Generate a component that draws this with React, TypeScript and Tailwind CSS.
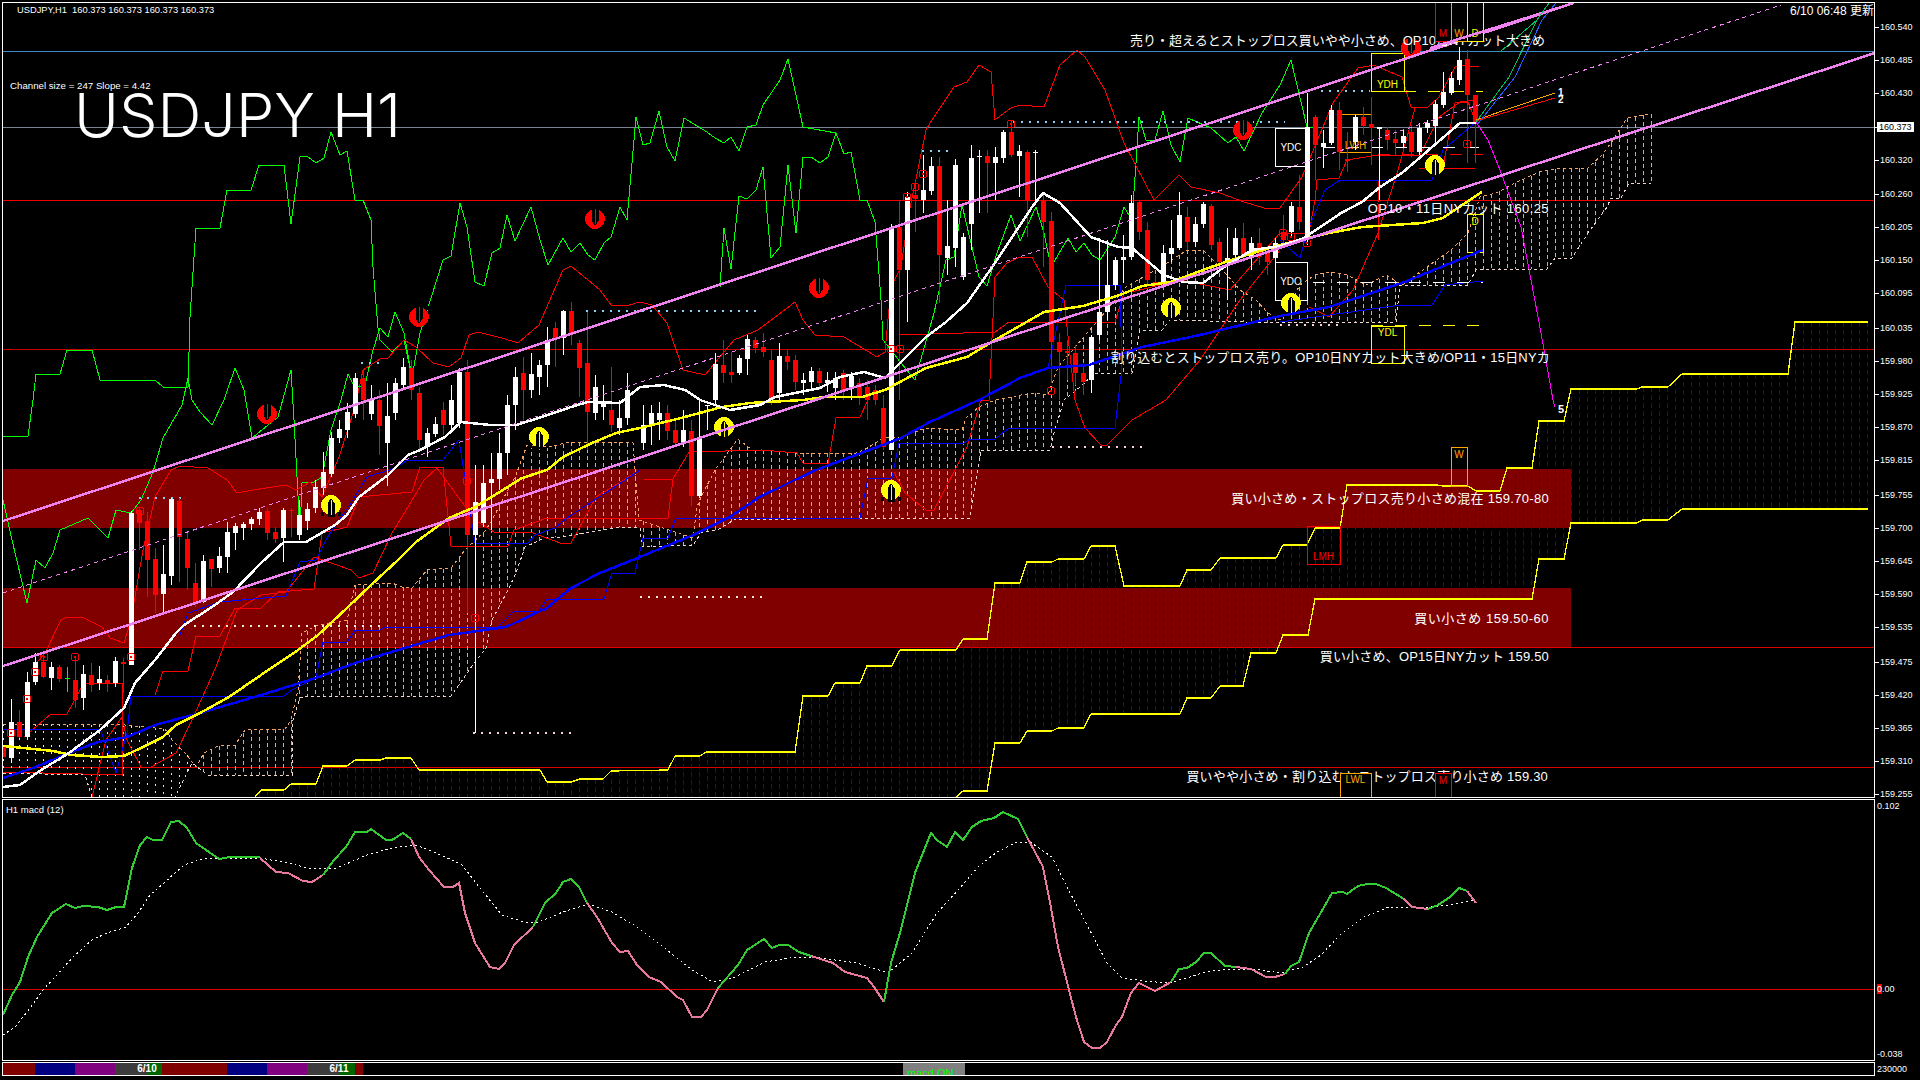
import React from "react";

type P = { pts: string; c: string; w?: number; d?: string };

const parse = (s: string) => s.trim().split(/\s+/).map((t) => t.split(",").map(Number));
const at = (a: number[][], x: number) => {
  if (x <= a[0][0]) return a[0][1];
  for (let i = 1; i < a.length; i++) {
    if (x <= a[i][0]) {
      const [x0, y0] = a[i - 1];
      const [x1, y1] = a[i];
      return y0 + ((y1 - y0) * (x - x0)) / (x1 - x0 || 1);
    }
  }
  return a[a.length - 1][1];
};

const senkouUp =
  "255,797 261,790 284,790 291,784 316,784 323,766 347,766 355,760 380,760 386,758 411,758 419,770 540,770 547,782 571,782 580,779 603,779 611,771 668,770 675,756 700,756 706,752 795,752 803,696 828,696 835,683 860,683 867,666 892,666 900,650 956,650 963,639 987,639 995,583 1020,583 1027,562 1052,562 1058,559 1084,559 1091,546 1115,546 1124,586 1180,586 1187,570 1211,570 1220,558 1276,558 1283,545 1307,545 1315,528 1340,528 1347,485 1437,485 1443,486 1468,486 1476,491 1500,491 1507,468 1532,468 1539,421 1564,421 1571,389 1637,389 1642,387 1668,387 1682,374 1788,374 1795,322 1868,322";
const senkouLow =
  "955,798 963,791 987,791 995,743 1020,743 1027,731 1052,731 1058,728 1084,728 1091,714 1180,714 1187,698 1211,698 1220,686 1243,686 1251,653 1276,653 1283,635 1308,635 1315,599 1532,599 1539,559 1564,559 1571,523 1637,523 1642,520 1668,520 1682,509 1868,509";
const kumoUp =
  "3,724 125,725 165,729 172,740 187,755 196,767 204,753 220,745 235,745 245,730 285,729 291,720 298,690 302,633 318,625 347,620 355,585 392,583 402,587 412,588 427,570 451,568 465,550 486,530 492,520 508,490 516,475 527,445 547,447 571,442 620,442 633,443 639,520 693,538 697,507 701,497 715,470 726,455 738,439 752,450 766,450 795,453 856,453 864,450 885,437 901,437 926,428 962,430 966,418 979,407 995,400 1032,393 1048,395 1058,367 1101,317 1126,287 1150,273 1167,263 1187,250 1203,250 1220,267 1240,290 1256,300 1268,313 1280,320 1300,285 1315,275 1329,272 1347,275 1366,285 1386,275 1402,285 1427,267 1451,250 1468,233 1480,197 1496,193 1515,183 1539,172 1562,168 1588,168 1602,155 1611,143 1627,118 1651,114";
const kumoLow =
  "3,773 85,775 92,797 175,797 180,787 192,763 208,775 292,775 292,723 300,698 307,696 451,696 475,662 486,648 492,620 508,590 516,573 525,547 547,537 563,537 620,527 640,528 642,547 693,545 701,533 717,530 734,520 864,518 970,518 978,470 981,450 1050,450 1054,433 1064,400 1085,383 1093,373 1132,373 1140,330 1162,330 1170,320 1280,323 1396,322 1400,285 1468,285 1476,270 1547,269 1555,258 1572,258 1588,233 1607,207 1611,198 1621,198 1629,183 1651,183";

const bars = (a: string, b: string, from: number, to: number, pred?: (x: number) => boolean) => {
  const u = parse(a);
  const l = parse(b);
  let d = "";
  for (let x = 3; x <= to; x += 8) {
    if (x < from || (pred && !pred(x))) continue;
    const t = Math.round(at(u, x));
    const m = Math.round(at(l, x));
    if (m > t) d += `M${x} ${t}V${m}`;
  }
  return d;
};

const thin: P[] = [
  { c: "#00ff00", pts: "3,436 28,436 33,400 36,374 60,374 67,350 92,350 100,380 155,380 163,387 188,387 190,317 196,228 220,228 227,190 251,190 259,165 284,165 291,224 300,157 307,156 316,163 324,158 331,132 340,155 347,151 355,200 363,200 371,220 373,267 378,328 380,340 392,352 404,340 412,377" },
  { c: "#00ff00", pts: "3,500 12,540 27,603 36,560 45,568 53,553 60,530 88,518 108,538 116,510 131,513 141,500 153,472 163,438 182,405 188,378 192,400 200,412 212,425 224,400 235,368 244,390 252,438 278,417 291,370 294,420 300,533 302,483 314,482 322,477 331,430 341,400 348,374 355,388 365,385 373,350 380,328 388,337 395,312 404,333 412,377 420,333 443,260 451,256 460,203 467,227 475,282 484,286 492,253 500,248 507,215 515,241 531,207 540,240 548,265 563,238 571,252 580,243 588,255 595,260 604,243 611,237 620,207 627,220 636,117 643,145 650,143 659,111 667,147 675,161 684,118 707,132 715,138 724,143 731,137 739,151 747,127 756,125 763,105 780,80 788,59 803,127 836,133 844,154 851,152 860,200 867,200 875,222 881,300 883,340 891,350 901,363 915,380 934,313 946,260 954,257 962,205 979,277 987,286 997,253 1011,215 1020,241 1036,207 1044,233 1051,267 1068,238 1076,252 1084,243 1092,255 1100,260 1115,237 1124,207 1132,220 1136,163 1139,117 1146,140 1155,140 1163,111 1171,145 1180,162 1188,118 1211,128 1228,143 1236,137 1244,151 1262,113 1280,85 1291,60 1307,127 1315,127" },
  { c: "#00ff00", pts: "720,287 724,228 731,269 739,196 747,199 756,190 763,167 771,258 780,247 788,165 796,233 803,157 811,157 820,163 828,157 836,133" },
  { c: "#ff0000", pts: "33,667 45,653 61,620 67,617 82,617 102,627 110,638 124,643 131,620 143,550 155,497 171,470 180,466 208,468 227,480 237,493 253,490 286,485 296,490 310,482 322,497 339,457 355,407 363,370 380,359 388,358 404,340 416,347 433,363 449,367 461,358 469,335 478,332 502,338 518,343 539,325 563,270 571,266 600,290 612,306 629,305 640,302 652,305 667,323 683,370 705,375 734,340 758,330 795,302 803,320 815,335 844,337 877,357 885,352 891,287 901,267 909,213 926,130 932,120 954,87 967,82 979,65 991,72 995,120 1011,108 1020,105 1044,107 1060,65 1077,50 1085,57 1105,90 1124,143 1154,200 1179,175 1191,187 1220,193 1244,202 1264,208 1280,208 1302,177 1333,103 1358,68 1374,65 1390,72 1402,77 1411,107 1427,108 1439,97 1455,67 1468,65" },
  { c: "#ff0000", pts: "92,797 106,740 122,717 127,740 141,767 151,767 176,753 192,720 216,667 237,610 261,595 286,592 314,557 351,570 359,578 373,573 392,533 408,507 424,480 437,468 475,520 494,532 530,532 563,544 571,543 596,497 640,470" },
  { c: "#ff0000", pts: "893,470 905,493 926,510 934,510 967,447 981,400 989,400 995,277 1007,263 1020,257 1032,257 1048,287 1064,300 1075,400 1085,428 1101,445 1107,445 1132,420 1166,400 1200,360 1240,300 1280,250" },
  { c: "#ff0000", pts: "24,737 51,714 67,714 84,683 122,683 122,775 3,772" },
  { c: "#ff0000", pts: "155,695 163,671 188,671 196,636 220,636 235,608 261,608 278,592 314,589 322,533 347,527 359,497 412,492 420,467 443,467 451,546 508,546 514,530 547,518 668,518 673,479 644,479 673,479 689,452 762,450 797,453 803,463 828,464 836,418 860,417 868,400" },
  { c: "#ff0000", pts: "900,335 995,332 1009,322 1115,322 1124,293 1140,290 1180,280 1230,290 1280,233 1309,233 1315,200 1317,180 1339,178 1347,160 1378,155 1420,155 1439,117 1460,102 1475,100" },
  { c: "#ff0000", pts: "1309,307 1329,317 1353,290 1378,233 1398,170 1415,108" },
  { c: "#ff0000", pts: "1380,160 1378,203 1379,240" },
  { c: "#ff0000", pts: "1419,168 1475,168" },
  { c: "#ff0000", pts: "1443,167 1455,103 1468,102 1476,122" },
  { c: "#0000ff", pts: "3,729 100,729 116,773 127,733 131,696 284,696 292,690 316,678 323,642 347,642 355,630 380,630 386,627 498,627 514,611 539,611 547,599 604,599 612,573 635,573 643,538 668,538 676,518 860,518 868,478 892,478 899,443 964,443 970,439 995,439 1009,428 1115,428 1122,367 1120,285 1066,285 1048,368" },
  { c: "#0000ff", pts: "180,635 188,613 220,602 286,596 300,562 316,560 327,538 351,503 367,477 392,469 408,460 443,460 459,440 475,543 527,544 535,535 555,528 567,518 610,490 640,470" },
  { c: "#0000ff", pts: "1280,240 1300,258 1307,232 1325,190 1340,180 1400,180 1432,180 1443,150 1476,122" },
  { c: "#0000ff", pts: "1280,322 1400,305 1432,305 1445,285 1483,281" },
];

const candles: [number, number, number, number, number, string][] = [
  [3,745,757,745,757,"r"],[11,722,758,699,763,"w"],[19,722,737,710,738,"r"],[27,682,737,672,738,"w"],[35,662,682,653,685,"w"],[43,662,677,653,678,"r"],[51,667,678,662,690,"w"],[59,667,679,665,682,"r"],[67,678,679,667,692,"g"],[75,680,700,657,708,"r"],[83,674,698,665,710,"w"],[91,675,685,663,692,"r"],[99,679,683,666,690,"w"],[107,680,684,675,692,"r"],[115,661,683,657,687,"w"],[123,662,664,658,693,"r"],[131,513,665,511,665,"w"],[139,510,523,507,550,"r"],[147,521,560,512,597,"r"],[155,559,595,548,613,"r"],[163,574,594,545,613,"w"],[171,499,576,498,585,"w"],[179,501,537,498,582,"r"],[187,539,568,532,590,"r"],[195,583,603,563,607,"r"],[203,561,602,555,603,"w"],[211,559,569,559,587,"r"],[219,556,568,547,573,"w"],[227,532,557,522,573,"w"],[235,526,533,523,550,"w"],[243,524,528,522,540,"w"],[251,519,524,517,530,"w"],[259,512,519,508,525,"w"],[267,511,533,508,540,"r"],[275,532,539,527,543,"r"],[283,510,538,508,562,"w"],[291,510,511,508,537,"r"],[299,515,535,500,540,"w"],[307,509,521,503,530,"w"],[315,487,508,480,513,"w"],[323,472,488,452,495,"w"],[331,438,474,432,477,"w"],[339,429,438,420,443,"w"],[347,412,430,403,438,"w"],[355,378,414,373,418,"w"],[363,378,400,370,420,"r"],[371,400,414,385,420,"w"],[379,400,426,390,455,"r"],[387,416,443,383,486,"w"],[395,383,413,378,420,"w"],[403,367,385,358,388,"w"],[411,368,390,360,400,"r"],[419,393,440,387,450,"r"],[427,433,447,428,457,"w"],[435,424,434,417,437,"w"],[443,410,425,402,435,"r"],[451,400,425,385,430,"w"],[459,372,423,368,428,"w"],[467,372,535,360,613,"r"],[475,502,535,465,733,"w"],[483,483,523,465,527,"w"],[491,479,483,453,530,"w"],[499,453,479,433,490,"w"],[507,405,453,395,475,"w"],[515,377,405,367,430,"w"],[523,373,390,357,420,"r"],[531,374,390,353,398,"w"],[539,365,377,360,395,"w"],[547,340,365,327,387,"w"],[555,328,338,322,367,"r"],[563,311,338,310,355,"w"],[571,311,333,302,345,"r"],[579,343,368,340,397,"r"],[587,363,412,312,450,"r"],[595,387,413,375,420,"w"],[603,402,407,385,420,"w"],[611,410,425,367,432,"r"],[619,418,428,400,435,"w"],[627,390,418,373,425,"w"],[643,425,443,405,450,"w"],[651,413,425,405,445,"w"],[659,413,420,402,440,"w"],[667,413,431,405,440,"r"],[675,430,443,420,447,"r"],[683,430,443,410,447,"w"],[691,431,496,420,506,"r"],[699,437,496,400,498,"w"],[707,405,406,405,430,"w"],[715,364,400,353,405,"w"],[723,365,373,340,383,"r"],[731,372,375,352,383,"r"],[739,358,373,355,375,"w"],[747,339,359,335,375,"w"],[755,340,348,337,353,"r"],[763,347,352,333,357,"r"],[771,360,400,350,405,"r"],[779,356,393,343,400,"w"],[787,356,362,350,370,"r"],[795,360,382,355,390,"r"],[803,380,383,373,395,"w"],[811,371,382,367,388,"w"],[819,371,383,368,390,"r"],[827,380,383,372,392,"w"],[835,378,388,372,400,"w"],[843,373,390,370,400,"r"],[851,376,388,372,400,"w"],[859,383,397,378,405,"r"],[867,387,400,380,420,"r"],[875,390,400,385,405,"r"],[883,408,447,395,450,"r"],[891,227,450,224,450,"w"],[899,227,270,200,400,"r"],[907,197,270,192,322,"w"],[915,195,199,183,232,"r"],[923,190,200,155,213,"w"],[931,166,191,157,195,"w"],[939,166,255,157,303,"r"],[947,246,258,200,275,"w"],[955,165,248,159,267,"w"],[963,237,277,233,280,"w"],[971,158,224,145,250,"w"],[979,156,157,150,213,"w"],[987,156,163,150,213,"r"],[995,157,163,147,200,"w"],[1003,132,158,130,163,"w"],[1011,132,155,120,157,"r"],[1019,151,156,145,197,"w"],[1027,152,200,150,237,"r"],[1035,152,153,150,200,"w"],[1043,200,222,193,267,"r"],[1051,221,342,212,383,"r"],[1059,342,352,333,400,"r"],[1067,351,353,340,380,"r"],[1075,353,373,345,385,"r"],[1083,373,382,365,395,"r"],[1091,337,380,335,393,"w"],[1099,312,335,238,340,"w"],[1107,285,312,240,320,"w"],[1115,260,285,257,290,"w"],[1123,257,260,235,283,"w"],[1131,203,257,195,260,"w"],[1139,202,232,200,240,"r"],[1147,230,280,222,285,"r"],[1155,282,285,275,290,"r"],[1163,253,282,245,285,"w"],[1171,248,254,220,262,"w"],[1179,215,248,192,250,"w"],[1187,217,242,207,250,"r"],[1195,224,242,217,247,"w"],[1203,204,224,202,228,"w"],[1211,206,245,204,250,"r"],[1219,242,262,238,270,"r"],[1227,258,263,228,300,"w"],[1235,238,255,228,260,"w"],[1243,238,257,223,262,"r"],[1251,243,257,237,270,"w"],[1259,243,257,228,265,"r"],[1267,253,262,247,275,"r"],[1275,243,258,238,268,"w"],[1283,232,240,215,245,"r"],[1291,206,232,202,237,"w"],[1299,207,222,175,230,"r"],[1307,127,240,93,245,"w"],[1315,117,145,115,180,"r"],[1323,143,147,130,168,"w"],[1331,110,143,105,145,"w"],[1339,110,152,102,170,"r"],[1347,159,161,132,172,"r"],[1355,117,142,115,150,"w"],[1363,117,126,107,135,"r"],[1371,124,128,97,165,"r"],[1379,127,129,127,200,"w"],[1387,130,140,127,150,"r"],[1395,139,143,130,155,"r"],[1403,136,143,130,148,"w"],[1411,132,152,125,157,"r"],[1419,128,152,123,155,"w"],[1427,123,128,120,133,"w"],[1435,104,126,100,145,"w"],[1443,92,105,72,108,"w"],[1451,78,93,72,95,"w"],[1459,60,80,47,85,"w"],[1467,59,95,50,163,"r"],[1475,95,122,95,163,"r"],
];

const maWhite = "3,787 20,785 41,770 69,753 100,730 124,708 135,683 155,660 176,633 184,625 212,607 233,592 261,563 284,542 306,542 335,525 347,515 359,497 388,475 408,455 420,450 445,437 461,422 490,425 516,425 539,418 571,407 588,402 620,403 640,387 664,385 685,390 700,400 730,410 760,405 775,397 820,388 840,377 864,372 885,378 893,370 926,337 946,322 967,303 995,263 1032,207 1043,193 1060,203 1091,237 1118,247 1132,248 1164,275 1183,282 1203,283 1224,267 1252,250 1280,246 1304,238 1341,213 1362,202 1380,187 1402,173 1431,148 1460,123 1476,123";
const maYellow = "3,746 53,751 71,755 102,757 124,756 143,747 163,737 176,725 200,713 229,697 261,675 294,653 318,635 347,608 371,585 398,560 416,542 449,518 475,507 498,493 522,478 547,470 563,457 592,443 616,433 640,428 681,418 722,407 750,403 803,400 824,397 862,397 885,390 926,368 967,357 995,340 1044,312 1083,306 1120,295 1142,286 1171,282 1203,270 1240,257 1280,245 1329,233 1362,227 1423,223 1443,218 1482,192";
const maBlue = "3,778 33,768 69,753 98,742 127,737 155,725 200,713 261,695 316,678 355,663 408,647 449,635 506,627 547,608 571,588 600,573 640,557 693,535 730,517 758,498 811,472 869,450 901,438 930,422 979,400 1020,378 1048,368 1089,365 1142,347 1191,337 1280,316 1329,307 1402,283 1451,263 1483,250";

const rings = [[11,733],[27,699],[35,672],[44,657],[75,657],[131,657],[140,511],[467,481],[475,618],[891,349],[900,349],[907,197],[915,187],[923,174],[1011,124],[1051,391],[1283,233],[1291,237],[1307,243],[1467,144]];
const reds = [[267,414],[419,317],[595,219],[819,288],[1243,130],[1411,48]];
const ups = [[331,505],[539,437],[724,427],[891,490],[1171,308],[1291,303],[1435,165]];

const dots: [number, number, number, string][] = [
  [361,380,363,"#87cefa"],[586,762,311,"#87cefa"],[922,954,151,"#87cefa"],[1013,1146,122,"#87cefa"],[1156,1285,122,"#87cefa"],[1321,1370,91,"#87cefa"],[139,186,498,"#87cefa"],
  [194,380,626,"#f5e6e6"],[640,762,597,"#f5e6e6"],[473,571,733,"#ffd0d8"],[1052,1146,447,"#ffd0d8"],[1280,1340,325,"#ffd0d8"],
];
const dashes: [number, number, number, string][] = [
  [1323,1483,147,"#ffffff"],[1313,1483,282,"#ffffff"],[1371,1483,325,"#ffff00"],[1404,1483,91,"#ffff00"],[1467,1483,66,"#ff0000"],[1378,1483,154,"#ff0000"],
];

const labels: [number, number, string, string][] = [
  [1545, 40, "売り・超えるとストップロス買いやや小さめ、OP10日NYカット大きめ", "tracking-normal"],
  [1549, 208, "OP10・11日NYカット 160.25", "tracking-[0.4px]"],
  [1550, 357, "割り込むとストップロス売り。OP10日NYカット大きめ/OP11・15日NYカ", "tracking-[0.2px]"],
  [1549, 498, "買い小さめ・ストップロス売り小さめ混在 159.70-80", "tracking-[0.3px]"],
  [1549, 618, "買い小さめ 159.50-60", "tracking-[0.5px]"],
  [1549, 656, "買い小さめ、OP15日NYカット 159.50", "tracking-[0.2px]"],
  [1548, 776, "買いやや小さめ・割り込むとストップロス売り小さめ 159.30", "tracking-[0.2px]"],
];

const boxes: [number, number, number, number, string, string, number, boolean][] = [
  [1371,53,33,38,"#ffff00","YDH",84,false],
  [1340,114,31,38,"#ffa500","LWH",145,false],
  [1275,128,32,38,"#ffffff","YDC",147,false],
  [1275,262,32,38,"#ffffff","YDO",281,false],
  [1371,326,33,37,"#ffff00","YDL",332,false],
  [1467,214,16,38,"#ffff00","D",221,false],
  [1451,447,16,39,"#ffa500","W",454,false],
  [1307,526,33,38,"#ff0000","LMH",556,false],
  [1340,773,31,30,"#ffa500","LWL",779,true],
  [1435,773,16,30,"#ff0000","M",780,true],
  [1435,-4,16,45,"#ff0000","M",33,true],
  [1451,-4,16,45,"#ffa500","W",33,true],
  [1467,-4,16,45,"#ffff00","D",33,true],
];

const axis: [string, string][] = [
  ["160.540","h-[33px]"],["160.485","h-[33px]"],["160.430","h-[34px]"],["160.373","h-[33px]"],["160.320","h-[34px]"],["160.260","h-[33px]"],["160.205","h-[33px]"],["160.150","h-[33px]"],["160.095","h-[35px]"],["160.035","h-[33px]"],["159.980","h-[33px]"],["159.925","h-[33px]"],["159.870","h-[33px]"],["159.815","h-[35px]"],["159.755","h-[33px]"],["159.700","h-[33px]"],["159.645","h-[33px]"],["159.590","h-[33px]"],["159.535","h-[35px]"],["159.475","h-[33px]"],["159.420","h-[33px]"],["159.365","h-[33px]"],["159.310","h-[33px]"],["159.255","h-[10px]"],
];

const macd: [string, string][] = [
  ["#32cd32","3,1015 12,995 20,982 28,957 37,937 52,913 66,904 75,908 83,906 98,907 107,910 116,907 124,907 132,868 140,845 147,837 153,840 162,840 171,822 179,821 187,828 196,843 219,859 230,857 260,857"],
  ["#e8789f","260,858 276,872 288,873 303,881 312,882 323,875"],
  ["#32cd32","323,875 334,860 346,847 355,832 367,832 371,829 386,840 392,840 403,833 411,839"],
  ["#e8789f","411,839 419,857 429,870 444,887 453,887 459,883 465,913 475,943 490,967 499,969 505,963 514,945 533,927"],
  ["#32cd32","533,927 545,903 556,893 563,882 571,879 579,887 587,903"],
  ["#e8789f","587,903 597,917 612,943 620,952 628,951 637,965 649,977 661,982 677,997 683,1000 692,1017 701,1017 707,1010 718,988"],
  ["#32cd32","718,988 738,965 747,950 764,939 772,948 779,945 788,945 799,952 811,956"],
  ["#e8789f","811,956 833,963 845,972 867,978 874,987 884,1002"],
  ["#32cd32","884,1002 891,963 900,933 915,873 931,833 937,840 947,847 955,832 963,840 972,827 981,821 994,818 1003,812 1018,819 1027,837"],
  ["#e8789f","1027,837 1043,867 1049,897 1058,947 1069,990 1076,1017 1084,1042 1092,1048 1100,1048 1107,1042 1116,1025 1122,1017 1131,993 1139,983 1155,991 1171,982"],
  ["#32cd32","1171,982 1179,969 1187,968 1196,962 1204,953 1211,953 1225,966 1236,967"],
  ["#e8789f","1236,967 1251,969 1266,977 1275,977 1285,974"],
  ["#32cd32","1285,974 1291,966 1299,962 1309,933 1324,907 1332,893 1343,892 1347,894 1358,886 1367,884 1376,884 1386,888 1404,899"],
  ["#e8789f","1404,899 1412,907 1428,909"],
  ["#32cd32","1428,909 1438,905 1450,897 1459,888 1467,891"],
  ["#e8789f","1467,891 1476,903"],
];
const signal = "3,1035 15,1027 31,1007 43,990 55,977 73,957 92,940 107,933 126,927 138,913 150,895 165,882 184,865 202,859 233,858 260,858 288,863 312,869 337,868 367,855 392,848 416,845 441,855 462,865 484,893 502,915 527,923 539,922 563,912 588,904 612,912 637,927 667,950 692,970 713,982 735,977 765,962 796,957 820,958 857,963 888,973 912,953 937,913 960,888 978,867 997,852 1015,843 1030,842 1052,857 1067,887 1086,923 1107,963 1122,978 1144,981 1168,983 1187,978 1205,972 1229,969 1254,969 1281,973 1303,967 1321,955 1340,935 1364,917 1389,907 1431,907 1450,905 1474,900";

const Line = ({ pts, c, w = 1, d }: P) => (
  <polyline points={pts} fill="none" stroke={c} strokeWidth={w} strokeDasharray={d} />
);

const UpMark = ({ x, y }: { x: number; y: number }) => (
  <g transform={`translate(${x} ${y})`}>
    <ellipse cx={0} cy={0} rx={10} ry={10} fill="#ffff00" />
    <path d="M-3.5 11.5V-2L0 -6.5L3.5 -2V11.5Z" fill="#000" />
    <path d="M0 -5V10" stroke="#ffff00" />
    <rect x={-10} y={7} width={3} height={4} fill="#000" />
    <rect x={7} y={7} width={3} height={4} fill="#000" />
  </g>
);
const DownMark = ({ x, y }: { x: number; y: number }) => (
  <g transform={`translate(${x} ${y})`}>
    <ellipse cx={0} cy={0} rx={10} ry={10} fill="#ff0000" />
    <path d="M-3.5 -11.5V2L0 6.5L3.5 2V-11.5Z" fill="#000" />
    <path d="M0 5V-10" stroke="#ff0000" />
    <rect x={-10} y={-11} width={3} height={4} fill="#000" />
    <rect x={7} y={-11} width={3} height={4} fill="#000" />
  </g>
);

export default function App() {
  return (
    <div className="w-[1920px] h-[1080px] bg-black flex flex-col pt-[2px] overflow-hidden text-white font-['Liberation_Sans',sans-serif]">
      <div className="flex h-[796px]">
        <div className="ml-[2px] w-[1873px] h-full border border-white box-border overflow-hidden">
          <svg className="block w-full h-full" viewBox="3 3 1871 794" shapeRendering="crispEdges">
            <rect x="3" y="469" width="1568" height="59" fill="#800000" />
            <rect x="3" y="588" width="1568" height="59" fill="#800000" />
            <path d="M3 51.5H1874" stroke="#3b8cc8" />
            <path d="M3 127.5H1874" stroke="#7a8496" />
            <path d="M3 200.5H1874" stroke="#f00000" />
            <path d="M3 349.5H1874" stroke="#c80000" />
            <path d="M3 647.5H1874" stroke="#e00000" />
            <path d="M3 767.5H1874" stroke="#e00000" />

            <path d={bars(senkouUp, senkouLow, 259, 1868)} stroke="#0000ff" strokeDasharray="5 3" fill="none" />
            <Line pts={senkouUp} c="#ffff00" w={1.3} />
            <Line pts={senkouLow} c="#ffff00" w={1.3} />
            <path d={bars(kumoUp, kumoLow, 3, 1651, (x) => x >= 200)} stroke="#f4a460" strokeDasharray="4 3" fill="none" />
            <path d={bars(kumoUp, kumoLow, 3, 199)} stroke="#efe4e4" strokeDasharray="2 5" fill="none" />
            <Line pts={kumoUp} c="#f4a460" d="3 3" />
            <Line pts={kumoLow} c="#f0d8d0" d="3 3" />

            {thin.map((l, i) => (
              <Line key={i} {...l} />
            ))}

            {dots.map(([a, b, y, c], i) => (
              <path key={i} d={`M${a} ${y}H${b}`} stroke={c} strokeWidth={2} strokeDasharray="2 6" />
            ))}
            {dashes.map(([a, b, y, c], i) => (
              <path key={i} d={`M${a} ${y}H${b}`} stroke={c} strokeDasharray="12 12" />
            ))}

            {boxes.filter((b) => !b[7]).map(([x, y, w, h, c, t, ty], i) => (
              <g key={i}>
                <rect x={x} y={y} width={w} height={h} fill="none" stroke={c} />
                <text x={x + w / 2} y={ty} textAnchor="middle" dominantBaseline="central" fill={c} className="text-[10px]">{t}</text>
              </g>
            ))}

            {candles.map(([x, t, b, wt, wb, k], i) => {
              const c = k === "w" ? "#ffffff" : k === "g" ? "#00ff00" : "#ff0000";
              return (
                <g key={i}>
                  <path d={`M${x + 0.5} ${wt}V${wb}`} stroke={c} />
                  <rect x={x - 2} y={t} width={5} height={Math.max(b - t, 1)} fill={c} />
                </g>
              );
            })}

            {rings.map(([x, y], i) => (
              <g key={i}>
                <circle cx={x} cy={y} r={4} fill="none" stroke="#ff0000" />
                <circle cx={x} cy={y} r={1.5} fill="#ff0000" />
              </g>
            ))}

            <Line pts="1476,120 1555,93" c="#ffa500" />
            <Line pts="1476,121 1555,98" c="#ff0000" />
            <Line pts="1476,122 1509,77 1537,20 1549,3" c="#00c060" />
            <Line pts="1477,125 1515,77 1542,20 1556,3" c="#2060ff" />
            <Line pts="1476,122 1488,140 1500,170 1521,227 1541,333 1553,400 1555,407" c="#ff00ff" />

            {reds.map(([x, y], i) => (
              <DownMark key={i} x={x} y={y} />
            ))}
            {ups.map(([x, y], i) => (
              <UpMark key={i} x={x} y={y} />
            ))}

            <Line pts={maBlue} c="#0000ff" w={2.5} />
            <Line pts={maYellow} c="#ffff00" w={2.5} />
            <Line pts={maWhite} c="#ffffff" w={2.5} />

            <Line pts="3,593 1781,5" c="#ee82ee" d="4 4" />
            <Line pts="3,521 1574,3" c="#ee82ee" w={2.5} />
            <Line pts="3,666 1875,53" c="#ee82ee" w={2.5} />

            <text x="17" y="10" dominantBaseline="central" fill="#fff" className="text-[9.3px]" xmlSpace="preserve">USDJPY,H1  160.373 160.373 160.373 160.373</text>
            <text x="10" y="85" dominantBaseline="central" fill="#fff" className="text-[9.7px]">Channel size = 247 Slope = 4.42</text>
            <text x="74" y="137" fill="#fff" className="text-[61px] font-light font-['Inter',sans-serif]">USDJPY H1</text>
            <text x="1790" y="11" dominantBaseline="central" fill="#fff" className="text-[12px] font-['Liberation_Sans','Noto_Sans_CJK_JP',sans-serif]">6/10 06:48 更新</text>
            <text x="1558" y="92" dominantBaseline="central" fill="#fff" className="text-[10px] font-bold">1</text>
            <text x="1558" y="99" dominantBaseline="central" fill="#fff" className="text-[10px] font-bold">2</text>
            <text x="1558" y="409" dominantBaseline="central" fill="#fff" className="text-[11px] font-bold">5</text>

            {labels.map(([x, y, t, tr], i) => (
              <text key={i} x={x} y={y} textAnchor="end" dominantBaseline="central" fill="#fff" className={`text-[13px] font-['Liberation_Sans','Noto_Sans_CJK_JP',sans-serif] ${tr}`}>{t}</text>
            ))}

            {boxes.filter((b) => b[7]).map(([x, y, w, h, c, t, ty], i) => (
              <g key={i}>
                <rect x={x} y={y} width={w} height={h} fill="#000" stroke={c} />
                <text x={x + w / 2} y={ty} textAnchor="middle" dominantBaseline="central" fill={c} className="text-[10px]">{t}</text>
              </g>
            ))}
            <Line pts="1430,48 1574,3" c="#ee82ee" w={2.5} />
            <Line pts="1500,52 1537,20 1549,3" c="#00c060" />
          </svg>
        </div>
        <div className="flex-1 flex flex-col pt-[20px] text-[9px]">
          {axis.map(([v, h]) => (
            <div key={v} className={`flex items-start shrink-0 ${h}`}>
              <div className="w-[4px] h-px bg-white mt-[5px] shrink-0" />
              {v === "160.373" ? (
                <span className="bg-white text-black leading-[10px] px-[2px] -ml-[2px]">{v}</span>
              ) : (
                <span className="leading-[10px] pl-px">{v}</span>
              )}
            </div>
          ))}
        </div>
      </div>

      <div className="flex h-[262px] mt-px">
        <div className="ml-[2px] w-[1873px] h-full border border-white box-border overflow-hidden">
          <svg className="block w-full h-full" viewBox="3 800 1871 260" shapeRendering="crispEdges">
            <path d="M3 989.5H1874" stroke="#e00000" />
            <Line pts={signal} c="#ffffff" d="2 3" />
            {macd.map(([c, pts], i) => (
              <Line key={i} pts={pts} c={c} w={2} />
            ))}
            <text x="6" y="809" dominantBaseline="central" fill="#fff" className="text-[9.5px]">H1 macd (12)</text>
          </svg>
        </div>
        <div className="flex-1 flex flex-col pt-[2px] pl-[2px] text-[9px]">
          <div className="h-[183px] leading-[10px] shrink-0">0.102</div>
          <div className="h-[65px] leading-[10px] shrink-0"><span className="bg-[#ff0000]">0</span>.00</div>
          <div className="leading-[10px]">-0.038</div>
        </div>
      </div>

      <div className="flex h-[14px] mt-px">
        <div className="ml-[2px] w-[1873px] h-full border border-white box-border flex items-stretch overflow-hidden">
          <div className="w-[32px] bg-[#800000]" />
          <div className="w-[40px] bg-[#000080]" />
          <div className="w-[40px] bg-[#800080]" />
          <div className="w-[47px] relative flex">
            <div className="w-[32px] bg-[#3c3c3c]" />
            <div className="w-[15px] bg-[#006400]" />
            <span className="absolute inset-0 flex items-center justify-center pl-[17px] text-[10px] font-bold leading-none">6/10</span>
          </div>
          <div className="w-[65px] bg-[#800000]" />
          <div className="w-[40px] bg-[#000080]" />
          <div className="w-[40px] bg-[#800080]" />
          <div className="w-[48px] relative flex">
            <div className="w-[33px] bg-[#3c3c3c]" />
            <div className="w-[15px] bg-[#006400]" />
            <span className="absolute inset-0 flex items-center justify-center pl-[16px] text-[10px] font-bold leading-none">6/11</span>
          </div>
          <div className="w-[8px] bg-[#800000]" />
          <div className="w-[62px] ml-[540px] bg-[#808080] overflow-hidden pt-[4px] pl-[4px] text-[11px] leading-[12px] text-[#00ff00] whitespace-nowrap">macd ON</div>
        </div>
        <div className="flex-1 pl-[2px] text-[9px] leading-[14px]">230000</div>
      </div>
    </div>
  );
}
